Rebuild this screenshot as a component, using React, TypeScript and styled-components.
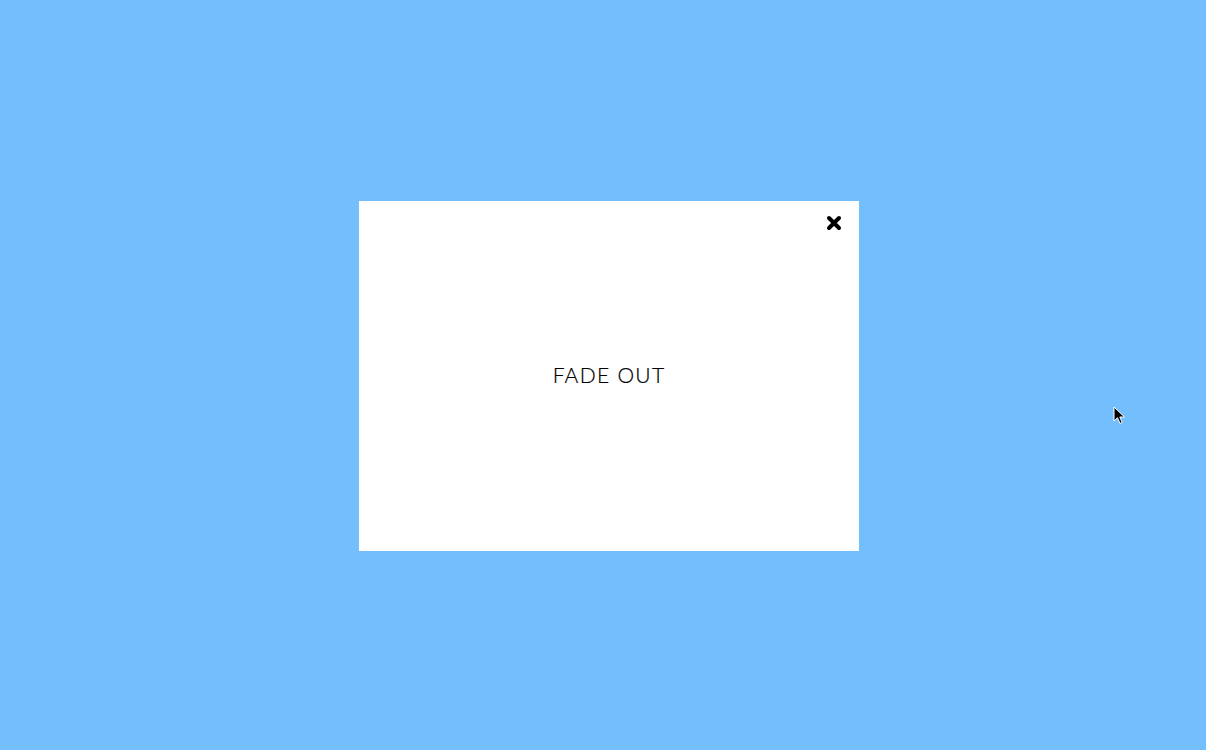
import styled, { createGlobalStyle } from "styled-components";

const GlobalStyle = createGlobalStyle`
  html, body {
    margin: 0;
    padding: 0;
    height: 100%;
  }
  body {
    background: #73bffd;
    font-family: "Lato", "Open Sans", sans-serif;
    overflow: hidden;
  }
`;

const Stage = styled.div`
  width: 100vw;
  height: 100vh;
  display: flex;
  align-items: center;
  justify-content: center;
  padding-left: 12px;
  padding-top: 2px;
  box-sizing: border-box;
  background: #73bffd;
  position: relative;
`;

const Modal = styled.div`
  position: relative;
  width: 500px;
  height: 350px;
  background: #ffffff;
  display: flex;
  align-items: center;
  justify-content: center;
`;

const Title = styled.div`
  font-family: "Lato", sans-serif;
  font-weight: 300;
  font-size: 21px;
  letter-spacing: 1.3px;
  color: #000;
  margin-bottom: 4px;
  -webkit-text-stroke: 0.2px #000;
`;

const CloseButton = styled.button`
  position: absolute;
  top: 13px;
  right: 16px;
  width: 18px;
  height: 18px;
  padding: 0;
  border: none;
  background: none;
  cursor: pointer;
  display: flex;
  align-items: center;
  justify-content: center;
`;

const Pointer = styled.svg`
  position: absolute;
  left: 1113px;
  top: 406px;
  pointer-events: none;
`;

export default function App() {
  return (
    <>
      <GlobalStyle />
      <Stage>
        <Modal>
          <CloseButton aria-label="close">
            <svg width="16" height="16" viewBox="0 0 16 16">
              <path d="M3 3 L13 13 M13 3 L3 13" stroke="#000" strokeWidth="4" strokeLinecap="round" />
            </svg>
          </CloseButton>
          <Title>FADE OUT</Title>
        </Modal>
        <Pointer width="14" height="20" viewBox="0 0 14 20">
          <path d="M1 1 L1 15 L4.5 11.8 L7 17.5 L9.2 16.5 L6.8 11 L11.5 11 Z" fill="#000" stroke="#fff" strokeWidth="1" strokeLinejoin="round" />
        </Pointer>
      </Stage>
    </>
  );
}
